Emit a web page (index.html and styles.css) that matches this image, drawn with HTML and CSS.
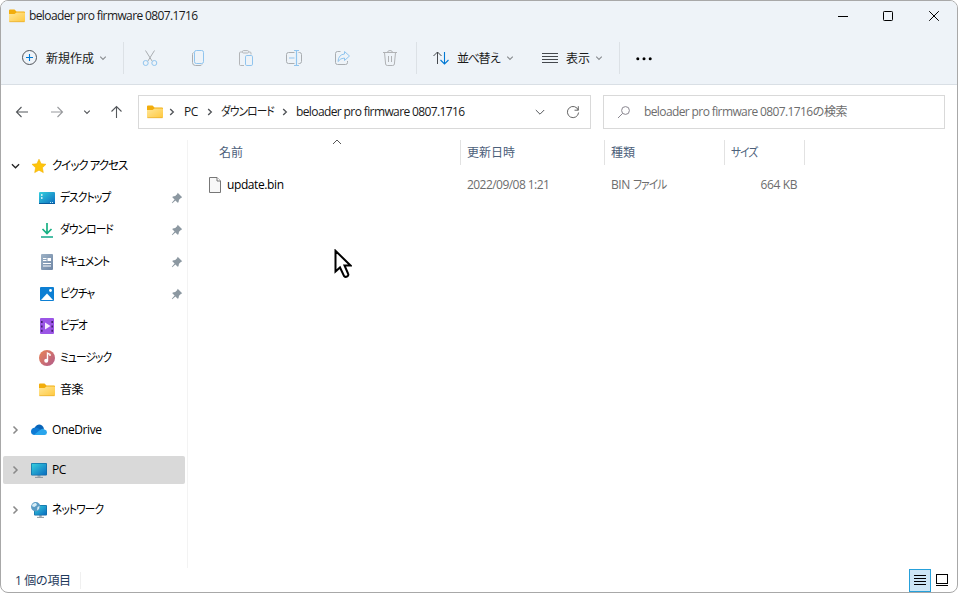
FILE: index.html
```html
<!DOCTYPE html>
<html lang="ja">
<head>
    <meta charset="UTF-8">
    <meta name="viewport" content="width=device-width, initial-scale=1.0">
    <title>beloader pro firmware 0807.1716</title>
    <link rel="stylesheet" href="styles.css">
</head>
<body>
    <!-- Shared icons -->
    <svg class="defs" width="0" height="0">
        <defs>
            <linearGradient id="g-folder" x1="0" y1="0" x2="1" y2="1">
                <stop offset="0" stop-color="#ffe79a"/><stop offset="1" stop-color="#ffc83d"/>
            </linearGradient>
            <linearGradient id="g-screen" x1="0" y1="0" x2="1" y2="1">
                <stop offset="0" stop-color="#35d0dd"/><stop offset="1" stop-color="#0b6cc0"/>
            </linearGradient>
            <linearGradient id="g-music" x1="0" y1="0" x2="1" y2="1">
                <stop offset="0" stop-color="#ea8554"/><stop offset="1" stop-color="#b05a8c"/>
            </linearGradient>
            <linearGradient id="g-doc" x1="0" y1="0" x2="1" y2="1">
                <stop offset="0" stop-color="#9db2c6"/><stop offset="1" stop-color="#6f86a5"/>
            </linearGradient>
        </defs>
        <symbol id="i-folder" viewBox="0 0 16 14">
            <path d="M0 1.5Q0 .5 1 .5H5.5L7.5 2.5H15Q16 2.5 16 3.5V6H0Z" fill="#f2ad0c"/>
            <path d="M0 5H5.5L7.5 3.4H15.2Q16 3.4 16 4.3V12Q16 13 15 13H1Q0 13 0 12Z" fill="url(#g-folder)"/>
            <path d="M.4 12.7H15.6" stroke="#e5ac2c" stroke-width=".7"/>
        </symbol>
        <symbol id="i-down" viewBox="0 0 8 8">
            <path d="M1.2 2.6L4 5.4 6.8 2.6" fill="none" stroke="currentColor" stroke-width="1.2"/>
        </symbol>
        <symbol id="i-right" viewBox="0 0 8 8">
            <path d="M2.2 .9L5.3 4 2.2 7.1" fill="none" stroke="currentColor" stroke-width="1.4"/>
        </symbol>
        <symbol id="i-pin" viewBox="0 0 12 12">
            <path d="M6.7 .8L11.2 5.2 9.9 5.9 8 7.8 7.5 10.3 6.7 10.7 4.4 8.4 1.3 11.2 .8 10.7 3.6 7.6 1.3 5.3 1.8 4.5 4.2 4.1 6.1 2.2Z" fill="#8c98a1"/>
        </symbol>
    </svg>

    <div class="window">
        <header class="header">
            <div class="titlebar">
                <svg class="folder"><use href="#i-folder"/></svg>
                <h1>beloader pro firmware 0807.1716</h1>
                <div class="window-buttons">
                    <svg viewBox="0 0 12 12"><path d="M2 6.500H12" stroke="#000"/></svg>
                    <svg viewBox="0 0 12 12"><rect x="1.500" y="1.500" width="9" height="9" rx=".8" fill="none" stroke="#000"/></svg>
                    <svg viewBox="0 0 12 12"><path d="M1.200 1.200L10.800 10.800M10.800 1.200L1.200 10.800" stroke="#000"/></svg>
                </div>
            </div>

            <div class="toolbar">
                <div class="tool new">
                    <svg class="ico" viewBox="0 0 16 16"><circle cx="8.500" cy="7.500" r="7" fill="none" stroke="#50545a"/><path d="M8.500 4V11M5 7.500H12" stroke="#0078d4" stroke-width="1.100"/></svg>
                    <span>新規作成</span>
                    <svg class="chev"><use href="#i-down"/></svg>
                </div>
                <div class="edit-tools">
                    <!-- cut -->
                    <svg class="ico" viewBox="0 0 16 16" fill="none"><path d="M3.500 .5L10.200 11.200M12.500 .5L5.800 11.200" stroke="#a9adb1"/><circle cx="3.700" cy="13" r="2.500" stroke="#90c4ee"/><circle cx="12.300" cy="13" r="2.500" stroke="#90c4ee"/></svg>
                    <!-- copy -->
                    <svg class="ico" viewBox="0 0 16 16" fill="none"><path d="M3.500 2.500Q2.500 3 2.500 4.500V12.500Q2.500 15.500 5.500 15.500H10Q11.500 15.500 12 14.500" stroke="#a9adb1"/><rect x="4.500" y=".5" width="9" height="13" rx="1.800" stroke="#90c4ee"/></svg>
                    <!-- paste -->
                    <svg class="ico" viewBox="0 0 16 16" fill="none"><path d="M4.500 2H2.500Q1.500 2 1.500 3V14.500Q1.500 15.500 2.500 15.500H6M11 2H12Q13 2 13 3V4.500" stroke="#b3b5b8"/><rect x="4.500" y=".6" width="6" height="2.400" rx="1" stroke="#b3b5b8"/><rect x="7.500" y="5.500" width="7" height="10" rx="1.300" stroke="#90c4ee"/></svg>
                    <!-- rename -->
                    <svg class="ico" viewBox="0 0 16 16" fill="none"><path d="M8.500 2.500H2.500Q.5 2.500 .5 4.500V11.500Q.5 13.500 2.500 13.500H8.500M12.500 2.500H13.500Q15.500 2.500 15.500 4.500V11.500Q15.500 13.500 13.500 13.500H12.500" stroke="#a9adb1"/><path d="M8 .5H13M8 15.500H13M10.500 .5V15.500M3 8H8.500" stroke="#90c4ee" stroke-width="1.200"/></svg>
                    <!-- share -->
                    <svg class="ico" viewBox="0 0 16 16" fill="none"><path d="M6.500 1.500H3.500Q1.500 1.500 1.500 3.500V12.500Q1.500 14.500 3.500 14.500H11.500Q13.500 14.500 13.500 12.500V11" stroke="#a9adb1"/><path d="M10.500 1.500L15.500 6 10.500 10.500V8Q6.500 8 4 11.500Q4.500 4.500 10.500 4Z" stroke="#90c4ee"/></svg>
                    <!-- delete -->
                    <svg class="ico" viewBox="0 0 16 16" fill="none"><path d="M1 2.500H15M5.500 2.500Q5.500 .5 8 .5T10.500 2.500M2.500 2.500L3.600 14Q3.800 15.500 5.300 15.500H10.700Q12.200 15.500 12.400 14L13.500 2.500M6.500 6V12M9.500 6V12" stroke="#b0b2b5"/></svg>
                </div>
                <div class="tool sort">
                    <svg class="ico" viewBox="0 0 16 16" fill="none"><path d="M4.500 14V2M.5 6L4.500 2 8.500 6" stroke="#44484d"/><path d="M11.500 2V14M7.500 10L11.500 14 15.500 10" stroke="#0078d4" stroke-width="1.100"/></svg>
                    <span>並べ替え</span>
                    <svg class="chev"><use href="#i-down"/></svg>
                </div>
                <div class="tool view">
                    <svg class="ico" viewBox="0 0 16 16"><path d="M0 3.500H16M0 6.500H16M0 9.500H16M0 12.500H16" stroke="#44484d"/></svg>
                    <span>表示</span>
                    <svg class="chev"><use href="#i-down"/></svg>
                </div>
                <div class="more">
                    <svg class="ico" viewBox="0 0 16 16"><circle cx="1.800" cy="8.700" r="1.500"/><circle cx="8" cy="8.700" r="1.500"/><circle cx="14.200" cy="8.700" r="1.500"/></svg>
                </div>
            </div>
        </header>

        <div class="navbar">
            <div class="nav-buttons">
                <svg class="ico" viewBox="0 0 16 16" fill="none"><path d="M14 8H2.500M7.500 3L2.500 8 7.500 13" stroke="#55585c" stroke-width="1.100"/></svg>
                <svg class="ico" viewBox="0 0 16 16" fill="none"><path d="M2 8H13.500M8.500 3L13.500 8 8.500 13" stroke="#989a9d" stroke-width="1.100"/></svg>
                <svg class="chev"><use href="#i-down"/></svg>
                <svg class="ico" viewBox="0 0 16 16" fill="none"><path d="M8.500 14V2.500M3.500 7.500L8.500 2.500 13.500 7.500" stroke="#55585c" stroke-width="1.100"/></svg>
            </div>
            <div class="address">
                <svg class="folder"><use href="#i-folder"/></svg>
                <svg class="sep"><use href="#i-right"/></svg>
                <span class="crumb-pc">PC</span>
                <svg class="sep"><use href="#i-right"/></svg>
                <span class="crumb-dl"><span class="kana">ダウンロード</span></span>
                <svg class="sep"><use href="#i-right"/></svg>
                <span class="crumb-name">beloader pro firmware 0807.1716</span>
                <svg class="history" viewBox="0 0 10 10"><path d="M.8 3L5 7.200 9.200 3" fill="none" stroke="#55585c"/></svg>
                <svg class="refresh" viewBox="0 0 14 14"><path d="M12.300 5.200A5.600 5.600 0 1 0 12.600 7.500M12.300 1.200V5.200H8.500" fill="none" stroke="#666"/></svg>
            </div>
            <div class="search">
                <svg viewBox="0 0 14 14"><circle cx="8.500" cy="5.500" r="3.900" fill="none" stroke="#8a8790"/><path d="M5.600 8.400L1 13" stroke="#8a8790"/></svg>
                <span>beloader pro firmware 0807.1716の検索</span>
            </div>
        </div>

        <div class="content">
            <nav class="sidebar">
                <div class="group">
                    <div class="item root">
                        <svg class="toggle open" viewBox="0 0 10 10"><path d="M1 3L5 7 9 3" fill="none" stroke="#222" stroke-width="1.400"/></svg>
                        <svg class="ico" viewBox="0 0 16 16"><path d="M8 1.200L10.100 5.700 15 6.300 11.400 9.700 12.300 14.600 8 12.200 3.700 14.600 4.600 9.700 1 6.300 5.900 5.700Z" fill="#fec50b" stroke="#f3b105" stroke-width=".6"/></svg>
                        <span class="kana quick">クイック アクセス</span>
                    </div>
                    <div class="item">
                        <svg class="ico" viewBox="0 0 16 16"><rect y="2" width="16" height="12" rx="1" fill="url(#g-screen)"/><path d="M2 5H3.500M2 8H3.500" stroke="#fff" stroke-width="1.500"/><path d="M0 13.500H16" stroke="#075a9c"/><path d="M11 12.500H12M13 12.500H14" stroke="#bde8f6"/></svg>
                        <span class="kana">デスクトップ</span>
                        <svg class="pin"><use href="#i-pin"/></svg>
                    </div>
                    <div class="item">
                        <svg class="ico" viewBox="0 0 16 16"><path d="M8 1V11.500M3.500 7L8 11.500 12.500 7" fill="none" stroke="#18b184" stroke-width="1.700"/><path d="M2 15H14" stroke="#12a98a" stroke-width="1.700"/></svg>
                        <span class="kana">ダウンロード</span>
                        <svg class="pin"><use href="#i-pin"/></svg>
                    </div>
                    <div class="item">
                        <svg class="ico" viewBox="0 0 16 16"><rect x="2" y="0" width="12" height="16" rx="1" fill="url(#g-doc)"/><path d="M4 4.500H7.500M4 6.500H7.500M4 9.500H12M4 12H12" stroke="#fff"/><path d="M8.500 4H12V7H8.500Z" fill="#fff"/></svg>
                        <span class="kana">ドキュメント</span>
                        <svg class="pin"><use href="#i-pin"/></svg>
                    </div>
                    <div class="item">
                        <svg class="ico" viewBox="0 0 16 16"><rect x="1" y="1" width="14" height="14" rx="1" fill="#0d7fd3"/><path d="M2 14L8 7.500 14 14Z" fill="#fff"/><circle cx="11.500" cy="4.500" r="1.400" fill="#fff"/></svg>
                        <span class="kana">ピクチャ</span>
                        <svg class="pin"><use href="#i-pin"/></svg>
                    </div>
                    <div class="item">
                        <svg class="ico" viewBox="0 0 16 16"><rect x="1" width="14" height="16" rx="1" fill="#9b55e6"/><path d="M2.800 3V14M13.200 3V14" stroke="#43206f" stroke-width="1.600" stroke-dasharray="2 2.400"/><path d="M6 4.500L11.500 8 6 11.500Z" fill="#f6eaff"/></svg>
                        <span class="kana">ビデオ</span>
                    </div>
                    <div class="item">
                        <svg class="ico" viewBox="0 0 16 16"><circle cx="8" cy="8" r="8" fill="url(#g-music)"/><path d="M8.500 10.500V3.200L11 4.500V6" fill="none" stroke="#fff" stroke-width="1.400"/><circle cx="7.200" cy="10.700" r="2" fill="#fff"/></svg>
                        <span class="kana">ミュージック</span>
                    </div>
                    <div class="item">
                        <svg class="folder"><use href="#i-folder"/></svg>
                        <span>音楽</span>
                    </div>
                </div>
                <div class="item root">
                    <svg class="toggle"><use href="#i-right"/></svg>
                    <svg class="ico" viewBox="0 0 16 16"><path d="M3.500 7Q4 3 8 2.500 11.500 2.500 13 6.500L8 10Z" fill="#0864b8"/><path d="M0 9.500Q0 6 4 5.500 8 5.500 10.500 9L5 13H3Q0 12.500 0 9.500Z" fill="#0f7ad4"/><path d="M3 12.700L8.500 8.500Q11 5.800 13.500 7.500 16 8.200 16 10.500 15.800 13 13.500 13H4Z" fill="#29a5ec"/></svg>
                    <span>OneDrive</span>
                </div>
                <div class="item root selected">
                    <svg class="toggle"><use href="#i-right"/></svg>
                    <svg class="ico" viewBox="0 0 16 16"><path d="M8 13V15" stroke="#a4adb4" stroke-width="3"/><path d="M4 15.400H12" stroke="#8b969e"/><rect y="1" width="16" height="12.500" rx="1" fill="#126ba4"/><rect x=".7" y="1.700" width="14.600" height="11.100" fill="url(#g-screen)"/></svg>
                    <span>PC</span>
                </div>
                <div class="item root">
                    <svg class="toggle"><use href="#i-right"/></svg>
                    <svg class="ico" viewBox="0 0 16 16"><path d="M9.500 13V15" stroke="#a4adb4" stroke-width="2.500"/><path d="M6 15.400H13" stroke="#8b969e"/><rect x="3" y="3" width="13" height="10.500" rx="1" fill="#126ba4"/><rect x="3.700" y="3.700" width="11.600" height="9.100" fill="url(#g-screen)"/><circle cx="4.700" cy="4.700" r="4.700" fill="#5a9bc4"/><path d="M1 3Q3 .5 5 1L6 3 3.500 5 1.500 4.500ZM6.500 5L8.500 4 8 7 6 8.500Z" fill="#d6ecf5"/></svg>
                    <span class="kana">ネットワーク</span>
                </div>
            </nav>

            <main class="files">
                <svg class="sorted" viewBox="0 0 10 6"><path d="M1 5L5 1 9 5" fill="none" stroke="#555"/></svg>
                <div class="row head">
                    <div class="col name">名前</div>
                    <div class="col date">更新日時</div>
                    <div class="col type">種類</div>
                    <div class="col size"><span class="kana">サイズ</span></div>
                </div>
                <div class="row file">
                    <div class="col name">
                        <svg viewBox="0 0 12 16"><path d="M.5 .5H8L11.500 4V15.500H.5Z" fill="#f8f8f8" stroke="#777"/><path d="M8 .5V4H11.500" fill="#fff" stroke="#777"/></svg>
                        <span>update.bin</span>
                    </div>
                    <div class="col date">2022/09/08 1:21</div>
                    <div class="col type">BIN <span class="kana">ファイル</span></div>
                    <div class="col size">664 KB</div>
                </div>
            </main>
        </div>

        <footer class="status">
            <span class="count">1 個の項目</span>
            <div class="view-mode active">
                <svg viewBox="0 0 12 12"><path d="M0 1.500H12M0 4.500H12M0 7.500H12M0 10.500H12" stroke="#000"/></svg>
            </div>
            <div class="view-mode">
                <svg viewBox="0 0 12 12"><rect x=".5" y=".5" width="11" height="9" fill="#fff" stroke="#000"/><path d="M0 11.500H12" stroke="#000"/></svg>
            </div>
        </footer>
    </div>

    <svg class="cursor" viewBox="0 0 18 30"><path d="M1.500 1.800V22.500L6 18.500 10 27Q11.500 28.500 13 27.500 15 26.500 14 24.500L10.500 16.500H16.500Z" fill="#fff" stroke="#000" stroke-width="2"/></svg>
</body>
</html>
```
FILE: styles.css
```css
* {
    box-sizing: border-box;
}

body {
    margin: 0;
    height: 593px;
    background: #fff;
    font-family: "Open Sans", "Noto Sans CJK JP", sans-serif;
    font-size: 12px;
    line-height: 16px;
    letter-spacing: -0.4px;
    color: #1a1a1a;
    overflow: hidden;
    white-space: nowrap;
}

svg {
    display: block;
    flex: none;
}

.defs {
    position: absolute;
}

/* narrow kana, as in Windows UI fonts */
.kana {
    display: inline-block;
    font-feature-settings: "palt";
    letter-spacing: -1px;
    transform: scaleX(0.89);
    transform-origin: left;
}

.kana.quick {
    transform: scaleX(0.95);
}

.ico {
    width: 16px;
    height: 16px;
}

.folder {
    width: 16px;
    height: 14px;
}

.chev {
    width: 8px;
    height: 8px;
    color: #8b8e92;
}

.window {
    display: flex;
    flex-direction: column;
    width: 958px;
    height: 593px;
    border: 1px solid #a8a8a8;
    border-radius: 8px;
    overflow: hidden;
}

/* Title bar and toolbar */
.header {
    height: 84px;
    background: #eef3f8;
    border-bottom: 1px solid #d9dfe5;
}

.titlebar {
    display: flex;
    align-items: center;
    height: 29px;
    padding-left: 8px;
}

.titlebar h1 {
    margin: 0 0 0 4px;
    font-size: 12px;
    font-weight: normal;
    letter-spacing: -0.61px;
}

.window-buttons {
    display: flex;
    gap: 34px;
    margin-left: auto;
    padding-right: 17px;
}

.window-buttons svg {
    width: 12px;
    height: 12px;
}

.toolbar {
    display: flex;
    align-items: center;
    height: 32px;
    margin-top: 12px;
}

.tool {
    display: flex;
    align-items: center;
    letter-spacing: 0;
}

.tool span {
    padding-top: 2px;
}

.new {
    width: 122px;
    padding-left: 20px;
}

.new span {
    width: 48px;
    margin: 0 5px 0 9px;
}

.edit-tools {
    display: flex;
    gap: 32px;
    height: 32px;
    align-items: center;
    padding: 0 18px 0 18px;
    border-left: 1px solid #dce1e6;
    border-right: 1px solid #dce1e6;
}

.sort {
    padding-left: 16px;
}

.sort span {
    width: 44px;
    margin: 0 5px 0 8px;
    letter-spacing: -1.2px;
}

.view {
    width: 105px;
    padding-left: 28px;
}

.view span {
    width: 24px;
    margin: 0 5px 0 8px;
}

.more {
    display: flex;
    align-items: center;
    height: 32px;
    padding-left: 16px;
    border-left: 1px solid #dce1e6;
}

/* Navigation and address */
.navbar {
    display: flex;
    height: 34px;
    margin-top: 10px;
}

.nav-buttons {
    display: flex;
    align-items: center;
    width: 137px;
    padding-left: 13px;
}

.nav-buttons .ico + .ico {
    margin-left: 19px;
}

.nav-buttons .chev {
    margin: 0 17px 0 18px;
    color: #55585c;
}

.address,
.search {
    display: flex;
    align-items: center;
    height: 34px;
    border: 1px solid #d9d9d9;
    letter-spacing: -0.61px;
}

.address {
    width: 453px;
    padding-left: 8px;
}

.sep {
    width: 8px;
    height: 8px;
    color: #55585c;
}

.address .folder + .sep {
    margin-left: 5px;
}

.crumb-pc {
    width: 16px;
    margin: 0 6px 0 8px;
    letter-spacing: -0.4px;
}

.crumb-dl {
    width: 54px;
    margin: 0 6px 0 7px;
}

.crumb-name {
    margin-left: 7px;
}

.history {
    width: 10px;
    height: 10px;
    margin-left: auto;
}

.refresh {
    width: 14px;
    height: 14px;
    margin: 0 10px 0 21px;
}

.search {
    width: 342px;
    margin-left: 12px;
    padding-left: 13px;
    color: #6d6d6d;
}

.search svg {
    width: 14px;
    height: 14px;
    margin-right: 13px;
}

/* Sidebar */
.content {
    display: flex;
    height: 439px;
    padding-top: 11px;
}

.sidebar {
    width: 187px;
    padding: 12px 2px 0;
    border-right: 1px solid #f3f3f3;
    color: #000;
}

.item {
    display: flex;
    align-items: center;
    height: 28px;
    padding: 0 2px 0 36px;
    margin-bottom: 4px;
    border-radius: 2px;
}

.item.root {
    padding-left: 8px;
}

.group {
    margin-bottom: 12px;
}

.sidebar > .item {
    margin-bottom: 12px;
}

.item span {
    margin-left: 5px;
}

.toggle {
    width: 9px;
    height: 10px;
    margin-right: 11px;
    color: #8a8a8a;
}

.selected {
    background: #d9d9d9;
}

.pin {
    width: 12px;
    height: 12px;
    margin-left: auto;
}

/* File list */
.files {
    width: 617px;
}

.sorted {
    width: 10px;
    height: 6px;
    margin: -1px 0 -5px 144px;
}

.row {
    display: flex;
    align-items: center;
}

.head {
    height: 25px;
    color: #4c607a;
    letter-spacing: 0;
}

.head .col {
    height: 25px;
    line-height: 26px;
    border-right: 1px solid #e2e2e2;
}

.col.name {
    width: 273px;
    padding-left: 31px;
}

.col.date {
    width: 144px;
    padding-left: 6px;
}

.col.type {
    width: 120px;
    padding-left: 6px;
}

.col.size {
    width: 80px;
    padding-left: 6px;
}

.file {
    height: 28px;
    margin-top: 6px;
    color: #6d6d6d;
}

.file .date {
    letter-spacing: -0.55px;
}

.file .name {
    display: flex;
    align-items: center;
    padding-left: 21px;
    color: #000;
}

.file .name svg {
    width: 12px;
    height: 16px;
    margin-right: 6px;
}

.file .size {
    padding-right: 8px;
    text-align: right;
}

/* Status bar */
.status {
    display: flex;
    align-items: center;
    height: 24px;
    color: #1e395b;
}

.count {
    width: 80px;
    margin-right: auto;
    padding: 1px 0 0 14px;
    border-right: 1px solid #f0f0f0;
}

.view-mode {
    display: flex;
    align-items: center;
    justify-content: center;
    width: 22px;
    height: 23px;
}

.view-mode:last-child {
    margin-right: 4px;
}

.view-mode svg {
    width: 12px;
    height: 12px;
}

.view-mode.active {
    background: #cde6f4;
    border: 1px solid #26a0da;
}

.cursor {
    position: absolute;
    left: 334px;
    top: 249px;
    width: 18px;
    height: 30px;
}
```
